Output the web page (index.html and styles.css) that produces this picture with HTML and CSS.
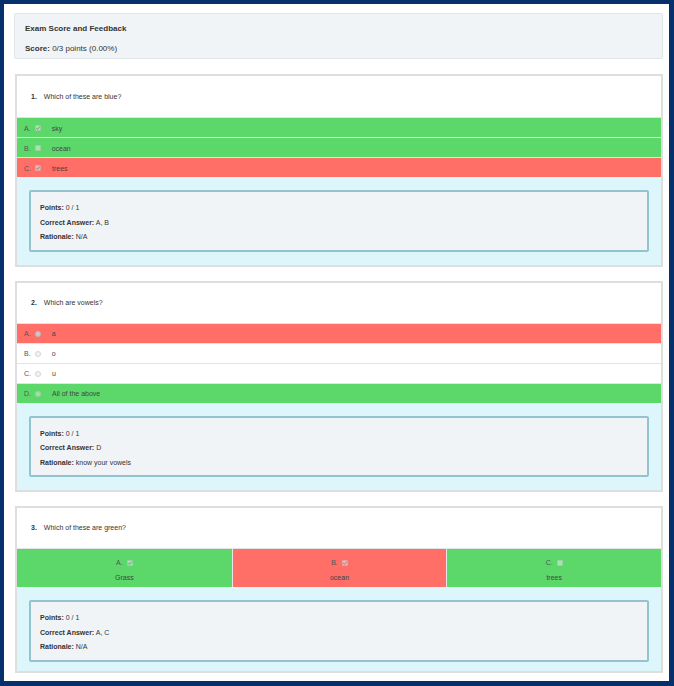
FILE: index.html
```html
<!DOCTYPE html>
<html>
<head>
<meta charset="utf-8">
<link rel="stylesheet" href="styles.css">
</head>
<body>
<div class="frame">
  <div class="summary">
    <h1 class="summary-title">Exam Score and Feedback</h1>
    <p class="summary-score"><b>Score:</b> 0/3 points (0.00%)</p>
  </div>

  <div class="question">
    <div class="q-head"><span class="q-num">1.</span><span>Which of these are blue?</span></div>
    <div class="options">
      <div class="opt correct"><span class="letter">A.</span><span class="check on"><svg viewBox="0 0 6 6"><path d="M1.2 3.1 L2.5 4.4 L4.8 1.6"/></svg></span><span class="opt-text">sky</span></div>
      <div class="opt correct"><span class="letter">B.</span><span class="check"></span><span class="opt-text">ocean</span></div>
      <div class="opt wrong"><span class="letter">C.</span><span class="check on"><svg viewBox="0 0 6 6"><path d="M1.2 3.1 L2.5 4.4 L4.8 1.6"/></svg></span><span class="opt-text">trees</span></div>
    </div>
    <div class="feedback">
      <div class="fb-box">
        <p><b>Points:</b> 0 / 1</p>
        <p><b>Correct Answer:</b> A, B</p>
        <p><b>Rationale:</b> N/A</p>
      </div>
    </div>
  </div>

  <div class="question">
    <div class="q-head"><span class="q-num">2.</span><span>Which are vowels?</span></div>
    <div class="options">
      <div class="opt wrong"><span class="letter">A.</span><span class="radio on"></span><span class="opt-text">a</span></div>
      <div class="opt"><span class="letter">B.</span><span class="radio"></span><span class="opt-text">o</span></div>
      <div class="opt"><span class="letter">C.</span><span class="radio"></span><span class="opt-text">u</span></div>
      <div class="opt correct"><span class="letter">D.</span><span class="radio"></span><span class="opt-text">All of the above</span></div>
    </div>
    <div class="feedback">
      <div class="fb-box">
        <p><b>Points:</b> 0 / 1</p>
        <p><b>Correct Answer:</b> D</p>
        <p><b>Rationale:</b> know your vowels</p>
      </div>
    </div>
  </div>

  <div class="question">
    <div class="q-head"><span class="q-num">3.</span><span>Which of these are green?</span></div>
    <div class="options columns">
      <div class="col correct">
        <div class="col-top"><span class="letter">A.</span><span class="check on"><svg viewBox="0 0 6 6"><path d="M1.2 3.1 L2.5 4.4 L4.8 1.6"/></svg></span></div>
        <div class="col-text">Grass</div>
      </div>
      <div class="col wrong">
        <div class="col-top"><span class="letter">B.</span><span class="check on"><svg viewBox="0 0 6 6"><path d="M1.2 3.1 L2.5 4.4 L4.8 1.6"/></svg></span></div>
        <div class="col-text">ocean</div>
      </div>
      <div class="col correct">
        <div class="col-top"><span class="letter">C.</span><span class="check"></span></div>
        <div class="col-text">trees</div>
      </div>
    </div>
    <div class="feedback last">
      <div class="fb-box">
        <p><b>Points:</b> 0 / 1</p>
        <p><b>Correct Answer:</b> A, C</p>
        <p><b>Rationale:</b> N/A</p>
      </div>
    </div>
  </div>
</div>
</body>
</html>
```

FILE: styles.css
```css
html, body {
  margin: 0;
  padding: 0;
  height: 686px;
  overflow: hidden;
}
body {
  background: #06306c;
  font-family: "Liberation Sans", Arial, sans-serif;
  color: #333;
}
.frame {
  box-sizing: border-box;
  margin: 4px 5px 0 4px;
  height: 677px;
  background: #fff;
  padding: 9px 6px 0 10px;
  overflow: hidden;
}
.summary {
  background: #f1f4f7;
  border: 1px solid #e1e4e8;
  border-radius: 2px;
  padding: 9px 10px 3px;
  margin-bottom: 15px;
}
.summary-title {
  margin: 0;
  font-size: 8px;
  line-height: 12px;
  font-weight: bold;
  color: #333;
}
.summary-score {
  margin: 8px 0 0;
  font-size: 8px;
  line-height: 12px;
}
.question {
  border: 2px solid #dedede;
  margin: 0 0 14px 1px;
  background: #fff;
}
.q-head {
  padding: 14px 14px 14px;
  font-size: 7px;
  line-height: 12px;
  display: flex;
}
.summary + .question .q-head {
  padding-top: 15px;
}
.q-num {
  font-weight: bold;
  margin-right: 7px;
}
.opt {
  display: flex;
  align-items: center;
  box-sizing: border-box;
  height: 20px;
  padding-top: 1px;
  border-top: 1px solid #e3e3e3;
  padding-left: 7px;
  font-size: 7px;
  color: #444;
}
.correct { background: #5cd86a; }
.wrong { background: #ff6f67; }
.letter { color: #555; }
.opt-text { margin-left: 11px; }
.check {
  display: inline-block;
  box-sizing: border-box;
  width: 6px;
  height: 6px;
  margin-left: 4px;
  background: rgba(235, 235, 235, 0.55);
  border: 1px solid rgba(0, 0, 0, 0.08);
  border-radius: 1px;
  position: relative;
}
.check svg {
  position: absolute;
  left: -1px;
  top: -1px;
  width: 6px;
  height: 6px;
}
.check svg path {
  fill: none;
  stroke: #777;
  stroke-width: 0.8;
}
.radio {
  display: inline-block;
  box-sizing: border-box;
  width: 6px;
  height: 6px;
  margin-left: 4px;
  border-radius: 50%;
  background: #f2f2f2;
  border: 1px solid #d6d6d6;
}
.radio.on {
  background: #c9c9c9;
  border-color: #bbb;
}
.opt.correct .radio {
  background: rgba(230, 230, 230, 0.5);
  border-color: rgba(0, 0, 0, 0.06);
}
.columns {
  display: grid;
  grid-template-columns: 1fr 1fr 1fr;
  border-top: 1px solid #e3e3e3;
}
.col {
  text-align: center;
  padding: 6px 0 2px;
  font-size: 7px;
  line-height: 15px;
  color: #444;
}
.col + .col {
  border-left: 1px solid #e6e6e6;
}
.col-top {
  display: flex;
  justify-content: center;
  align-items: center;
  height: 15px;
}
.feedback {
  background: #ddf6fb;
  padding: 13px 12px;
}
.feedback.last {
  padding-bottom: 9px;
}
.fb-box {
  background: #f1f4f7;
  border: 2px solid #92c3cf;
  border-radius: 2px;
  padding: 9px 9px 5px;
  font-size: 7px;
  line-height: 14.5px;
}
.fb-box p {
  margin: 0;
}
```
